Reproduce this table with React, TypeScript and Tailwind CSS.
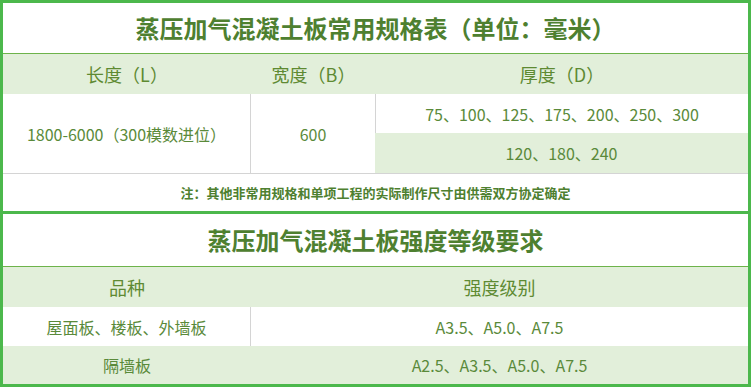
const font = { fontFamily: '"Microsoft YaHei", "Noto Sans CJK SC", "Noto Sans", sans-serif' };

function Title({ children }: { children: string }) {
  return (
    <div className="flex h-[51px] items-center justify-center border-b border-[#6db34a] bg-white text-[24px] font-bold leading-none text-[#4e8030]">
      {children}
    </div>
  );
}

export default function App() {
  return (
    <div style={font} className="box-border h-[387px] w-[751px] border-[3px] border-[#4cb84c] bg-white text-[#5a8a3a]">
      <Title>蒸压加气混凝土板常用规格表（单位：毫米）</Title>
      <div className="flex h-[40px] bg-[#e2efda] text-[18px] leading-none text-[#5e8a32]">
        <div className="flex w-[248px] items-center justify-center">长度（L）</div>
        <div className="flex w-[125px] items-center justify-center">宽度（B）</div>
        <div className="flex flex-1 items-center justify-center">厚度（D）</div>
      </div>
      <div className="flex h-[80px] border-b border-[#d4d4d4] text-[16px] leading-none">
        <div className="flex w-[248px] items-center justify-center border-r border-[#d4d4d4]">
          1800-6000（300模数进位）
        </div>
        <div className="flex w-[125px] items-center justify-center border-r border-[#d4d4d4]">600</div>
        <div className="flex flex-1 flex-col">
          <div className="flex h-[39px] items-center justify-center">75、100、125、175、200、250、300</div>
          <div className="-ml-px flex flex-1 items-center justify-center bg-[#e2efda]">120、180、240</div>
        </div>
      </div>
      <div className="flex h-[37px] items-center justify-center text-[13px] font-bold leading-none text-[#4e8030]">
        注：其他非常用规格和单项工程的实际制作尺寸由供需双方协定确定
      </div>
      <div className="h-[3px] bg-[#4cb84c]" />
      <div className="flex h-[53px] items-center justify-center border-b border-[#6db34a] text-[24px] font-bold leading-none text-[#4e8030]">
        蒸压加气混凝土板强度等级要求
      </div>
      <div className="flex h-[40px] bg-[#e2efda] text-[18px] leading-none text-[#5e8a32]">
        <div className="flex w-[248px] items-center justify-center">品种</div>
        <div className="flex flex-1 items-center justify-center">强度级别</div>
      </div>
      <div className="flex h-[39px] text-[16px] leading-none">
        <div className="flex w-[248px] items-center justify-center border-r border-[#d4d4d4]">屋面板、楼板、外墙板</div>
        <div className="flex flex-1 items-center justify-center">A3.5、A5.0、A7.5</div>
      </div>
      <div className="flex h-[38px] bg-[#e2efda] text-[16px] leading-none">
        <div className="flex w-[248px] items-center justify-center">隔墙板</div>
        <div className="flex flex-1 items-center justify-center">A2.5、A3.5、A5.0、A7.5</div>
      </div>
    </div>
  );
}
